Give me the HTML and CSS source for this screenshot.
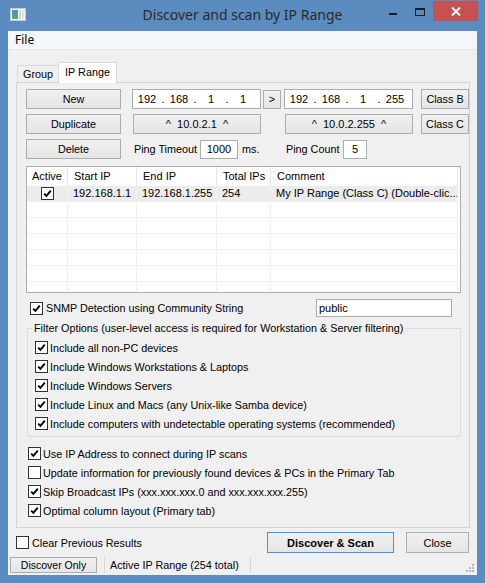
FILE: index.html
```html
<!DOCTYPE html>
<html>
<head>
<meta charset="utf-8">
<title>Discover and scan by IP Range</title>
<link rel="stylesheet" href="styles.css">
</head>
<body>
<div class="window">
  <div class="titlebar">
    <div class="tb-left">
      <svg class="app-icon" viewBox="0 0 16 13" width="16" height="13">
        <rect x="0.5" y="0.5" width="15" height="12" fill="#f4f4f4" stroke="#c9c9c9"/>
        <defs><linearGradient id="ig" x1="0" y1="0" x2="0" y2="1"><stop offset="0" stop-color="#4f8fd0"/><stop offset="1" stop-color="#4fb06a"/></linearGradient></defs>
        <rect x="2" y="2" width="6" height="9" fill="url(#ig)"/>
        <rect x="9" y="2" width="2" height="9" fill="#d8d8d8"/>
        <rect x="12" y="2" width="2" height="9" fill="#e4e4e4"/>
      </svg>
    </div>
    <div class="title">Discover and scan by IP Range</div>
    <div class="tb-right">
      <div class="tb-btn tb-min"><span class="min-glyph"></span></div>
      <div class="tb-btn tb-max"><span class="max-glyph"></span></div>
      <div class="tb-btn tb-close">
        <svg viewBox="0 0 10 9" width="10" height="9"><path d="M1 0.5 L9 8.5 M9 0.5 L1 8.5" stroke="#fff" stroke-width="2" fill="none"/></svg>
      </div>
    </div>
  </div>

  <div class="client">
    <div class="menubar"><span class="menu-item">File</span></div>

    <div class="tabstrip">
      <div class="tab tab-group">Group</div>
      <div class="tab tab-active">IP Range</div>
    </div>

    <div class="panel">
      <div class="row">
        <button class="btn btn-side">New</button>
        <div class="ipfield ip-start">
          <span class="oct">192</span><span class="dot">.</span><span class="oct">168</span><span class="dot">.</span><span class="oct">1</span><span class="dot">.</span><span class="oct">1</span>
        </div>
        <button class="btn btn-arrow">&gt;</button>
        <div class="ipfield ip-end">
          <span class="oct">192</span><span class="dot">.</span><span class="oct">168</span><span class="dot">.</span><span class="oct">1</span><span class="dot">.</span><span class="oct">255</span>
        </div>
        <button class="btn btn-class">Class B</button>
      </div>

      <div class="row row-gap">
        <button class="btn btn-side">Duplicate</button>
        <button class="btn btn-range btn-range1">^&nbsp; 10.0.2.1 &nbsp;^</button>
        <button class="btn btn-range btn-range2">^&nbsp; 10.0.2.255 &nbsp;^</button>
        <button class="btn btn-class">Class C</button>
      </div>

      <div class="row row-gap">
        <button class="btn btn-side">Delete</button>
        <span class="lbl lbl-timeout">Ping Timeout</span>
        <div class="field field-timeout">1000</div>
        <span class="lbl lbl-ms">ms.</span>
        <span class="lbl lbl-count">Ping Count</span>
        <div class="field field-count">5</div>
      </div>

      <div class="list">
        <div class="lrow lhead">
          <div class="c c-active">Active</div>
          <div class="c">Start IP</div>
          <div class="c">End IP</div>
          <div class="c">Total IPs</div>
          <div class="c">Comment</div>
        </div>
        <div class="lrow ldata lsel">
          <div class="c c-active"><span class="cb"><svg viewBox="0 0 11 11"><path d="M2.2 5.6 L4.4 7.8 L8.8 2.6"/></svg></span></div>
          <div class="c">192.168.1.1</div>
          <div class="c">192.168.1.255</div>
          <div class="c">254</div>
          <div class="c">My IP Range (Class C) (Double-clic...</div>
        </div>
        <div class="lrow ldata"><div class="c"></div><div class="c"></div><div class="c"></div><div class="c"></div><div class="c"></div></div>
        <div class="lrow ldata"><div class="c"></div><div class="c"></div><div class="c"></div><div class="c"></div><div class="c"></div></div>
        <div class="lrow ldata"><div class="c"></div><div class="c"></div><div class="c"></div><div class="c"></div><div class="c"></div></div>
        <div class="lrow ldata"><div class="c"></div><div class="c"></div><div class="c"></div><div class="c"></div><div class="c"></div></div>
        <div class="lrow ldata"><div class="c"></div><div class="c"></div><div class="c"></div><div class="c"></div><div class="c"></div></div>
        <div class="lrow ldata"><div class="c"></div><div class="c"></div><div class="c"></div><div class="c"></div><div class="c"></div></div>
      </div>

      <div class="snmp-row">
        <label class="check check-snmp"><span class="cb"><svg viewBox="0 0 11 11"><path d="M2.2 5.6 L4.4 7.8 L8.8 2.6"/></svg></span><span>SNMP Detection using Community String</span></label>
        <div class="field field-snmp">public</div>
      </div>

      <fieldset class="group">
        <legend>Filter Options (user-level access is required for Workstation &amp; Server filtering)</legend>
        <label class="check"><span class="cb"><svg viewBox="0 0 11 11"><path d="M2.2 5.6 L4.4 7.8 L8.8 2.6"/></svg></span><span>Include all non-PC devices</span></label>
        <label class="check"><span class="cb"><svg viewBox="0 0 11 11"><path d="M2.2 5.6 L4.4 7.8 L8.8 2.6"/></svg></span><span>Include Windows Workstations &amp; Laptops</span></label>
        <label class="check"><span class="cb"><svg viewBox="0 0 11 11"><path d="M2.2 5.6 L4.4 7.8 L8.8 2.6"/></svg></span><span>Include Windows Servers</span></label>
        <label class="check"><span class="cb"><svg viewBox="0 0 11 11"><path d="M2.2 5.6 L4.4 7.8 L8.8 2.6"/></svg></span><span>Include Linux and Macs (any Unix-like Samba device)</span></label>
        <label class="check"><span class="cb"><svg viewBox="0 0 11 11"><path d="M2.2 5.6 L4.4 7.8 L8.8 2.6"/></svg></span><span>Include computers with undetectable operating systems (recommended)</span></label>
      </fieldset>

      <div class="options">
        <label class="check"><span class="cb"><svg viewBox="0 0 11 11"><path d="M2.2 5.6 L4.4 7.8 L8.8 2.6"/></svg></span><span>Use IP Address to connect during IP scans</span></label>
        <label class="check"><span class="cb"></span><span>Update information for previously found devices &amp; PCs in the Primary Tab</span></label>
        <label class="check"><span class="cb"><svg viewBox="0 0 11 11"><path d="M2.2 5.6 L4.4 7.8 L8.8 2.6"/></svg></span><span>Skip Broadcast IPs (xxx.xxx.xxx.0 and xxx.xxx.xxx.255)</span></label>
        <label class="check"><span class="cb"><svg viewBox="0 0 11 11"><path d="M2.2 5.6 L4.4 7.8 L8.8 2.6"/></svg></span><span>Optimal column layout (Primary tab)</span></label>
      </div>
    </div>

    <div class="bottom-row">
      <label class="check check-clear"><span class="cb"></span><span>Clear Previous Results</span></label>
      <button class="btn btn-default">Discover &amp; Scan</button>
      <button class="btn btn-close">Close</button>
    </div>

    <div class="statusbar">
      <button class="btn btn-status">Discover Only</button>
      <span class="status-sep"></span>
      <span class="status-text">Active IP Range (254 total)</span>
      <span class="status-sep"></span>
      <svg class="grip" viewBox="0 0 9 9" width="9" height="9">
        <rect x="6" y="0" width="2" height="2" fill="#b8b8b8"/>
        <rect x="3" y="3" width="2" height="2" fill="#b8b8b8"/>
        <rect x="6" y="3" width="2" height="2" fill="#b8b8b8"/>
        <rect x="0" y="6" width="2" height="2" fill="#b8b8b8"/>
        <rect x="3" y="6" width="2" height="2" fill="#b8b8b8"/>
        <rect x="6" y="6" width="2" height="2" fill="#b8b8b8"/>
      </svg>
    </div>
  </div>
</div>
</body>
</html>
```

FILE: styles.css
```css
* { box-sizing: border-box; }
html, body { margin: 0; padding: 0; }
body {
  width: 485px;
  height: 583px;
  overflow: hidden;
  font-family: "Liberation Sans", Arial, sans-serif;
  font-size: 10.8px;
  color: #000;
}

.window {
  width: 485px;
  height: 583px;
  background: #5b8cbf;
  display: flex;
  flex-direction: column;
}

/* ---------- title bar ---------- */
.titlebar {
  height: 31px;
  flex: none;
  display: grid;
  grid-template-columns: 1fr auto 1fr;
  align-items: start;
}
.tb-left { padding: 8px 0 0 10px; }
.app-icon { display: block; }
.title {
  font-family: "Noto Sans", "Open Sans", sans-serif;
  font-size: 14px;
  color: #2a2a2a;
  line-height: 30px;
  white-space: nowrap;
}
.tb-right {
  display: flex;
  justify-content: flex-end;
  padding-top: 1px;
  padding-right: 7px;
}
.tb-btn {
  height: 20px;
  display: flex;
  justify-content: center;
  align-items: flex-start;
}
.tb-min { width: 26px; }
.tb-max { width: 26px; }
.tb-close {
  width: 45px;
  background: #c75050;
  align-items: center;
}
.min-glyph {
  margin-top: 12px;
  margin-left: -3px;
  width: 8px;
  height: 2px;
  background: #1c1c1c;
}
.max-glyph {
  margin-top: 7px;
  width: 10px;
  height: 8px;
  border: 1px solid #1c1c1c;
  border-top-width: 2px;
}

/* ---------- client ---------- */
.client {
  flex: 1;
  margin: 0 8px 8px 8px;
  background: #f0f0f0;
  display: flex;
  flex-direction: column;
}
.menubar {
  height: 19px;
  flex: none;
  background: #f5f6f7;
  border-bottom: 1px solid #e3e4e6;
  padding-left: 7px;
  font-family: "Noto Sans", "Open Sans", sans-serif;
  font-size: 12px;
  line-height: 17px;
}

/* ---------- tabs ---------- */
.tabstrip {
  margin-top: 12px;
  height: 20px;
  flex: none;
  display: flex;
  align-items: flex-end;
  padding-left: 9px;
}
.tab {
  height: 17px;
  border: 1px solid #d9d9d9;
  border-bottom: none;
  background: #f0f0f0;
  text-align: center;
  line-height: 16px;
}
.tab-group { width: 42px; }
.tab-active {
  width: 59px;
  height: 21px;
  margin-left: -1px;
  margin-bottom: -1px;
  background: #fff;
  line-height: 19px;
  position: relative;
  z-index: 1;
}

.panel {
  margin-left: 8px;
  width: 454px;
  height: 446px;
  flex: none;
  border: 1px solid #d4d4d4;
  padding: 6px 0 0 9px;
}

.row {
  display: flex;
  align-items: center;
  height: 20px;
}
.row-gap { margin-top: 5px; }

.btn {
  font: inherit;
  color: #000;
  padding: 0;
  margin: 0;
  height: 20px;
  border: 1px solid #adadad;
  background: linear-gradient(#f0f0f0, #e5e5e5);
  text-align: center;
  white-space: nowrap;
}
.btn-side { width: 95px; }
.btn-arrow { width: 18px; margin-left: 2px; height: 19px; }
.btn-class { width: 48px; margin-left: 8px; }
.btn-range { width: 128px; font-size: 11px; }
.btn-range1 { margin-left: 12px; }
.btn-range2 { margin-left: 24px; }

.ipfield {
  display: flex;
  align-items: center;
  width: 129px;
  height: 20px;
  border: 1px solid #abadb3;
  background: #fff;
  padding-left: 2px;
  font-size: 11px;
}
.ip-start { margin-left: 11px; }
.ip-end { margin-left: 3px; }
.oct { width: 24px; text-align: center; }
.dot { width: 8px; text-align: center; }

.lbl { white-space: nowrap; }
.lbl-timeout { margin-left: 13px; width: 66px; }
.lbl-ms { margin-left: 4px; width: 44px; }
.lbl-count { width: 57px; }
.field {
  height: 19px;
  border: 1px solid #abadb3;
  background: #fff;
  line-height: 17px;
}
.field-timeout { width: 38px; text-align: center; font-size: 11px; }
.field-count { width: 24px; text-align: center; font-size: 11px; }

/* ---------- list ---------- */
.list {
  margin-top: 7px;
  width: 435px;
  height: 127px;
  border: 1px solid #adadad;
  background: #fff;
  overflow: hidden;
  font-size: 11px;
}
.lrow {
  display: grid;
  grid-template-columns: 41px 69px 80px 54px 187px;
}
.lhead { height: 19px; }
.lhead .c {
  border-right: 1px solid #e5e5e5;
  line-height: 18px;
  padding-left: 6px;
}
.lhead .c-active { padding-left: 5px; }
.ldata { height: 16px; }
.ldata .c {
  border-right: 1px solid #f0f0f0;
  border-bottom: 1px solid #f0f0f0;
  line-height: 15px;
  padding-left: 5px;
  white-space: nowrap;
  overflow: hidden;
}
.lsel .c { background: #ececec; }
.ldata .c-active {
  padding-left: 0;
  display: flex;
  justify-content: center;
  align-items: center;
}

/* ---------- checkboxes ---------- */
.cb {
  width: 13px;
  height: 13px;
  flex: none;
  border: 1px solid #333;
  background: #fff;
  display: inline-flex;
}
.cb svg {
  width: 11px;
  height: 11px;
  display: block;
}
.cb path {
  fill: none;
  stroke: #000;
  stroke-width: 1.9;
}
.check {
  display: flex;
  align-items: center;
  gap: 2px;
  height: 19px;
  white-space: nowrap;
}

.snmp-row {
  margin-top: 6px;
  display: flex;
  align-items: center;
  height: 18px;
}
.check-snmp { margin-left: 4px; width: 286px; gap: 3px; }
.field-snmp { width: 136px; height: 18px; padding-left: 2px; line-height: 16px; font-size: 11px; }

.group {
  margin: 5px 0 0 1px;
  width: 434px;
  height: 115px;
  border: 1px solid #dcdcdc;
  padding: 3px 7px 0 7px;
  min-width: 0;
}
.group legend {
  padding: 0 2px;
  margin-left: -3px;
  line-height: 13px;
  white-space: nowrap;
}

.options {
  margin-top: 7px;
  padding-left: 2px;
}

/* ---------- bottom ---------- */
.bottom-row {
  margin-top: 4px;
  height: 21px;
  flex: none;
  display: flex;
  align-items: center;
  padding-left: 8px;
}
.check-clear { gap: 3px; }
.btn-default {
  margin-left: auto;
  width: 127px;
  height: 21px;
  border-color: #3399ff;
  font-weight: bold;
  font-size: 11px;
}
.btn-close {
  margin-left: 12px;
  margin-right: 8px;
  width: 63px;
  height: 21px;
  font-size: 11px;
}

.statusbar {
  margin-top: 2px;
  flex: 1;
  display: flex;
  align-items: center;
  padding-left: 2px;
}
.btn-status {
  width: 87px;
  height: 16px;
  font-size: 10.5px;
  line-height: 14px;
}
.status-sep {
  width: 1px;
  height: 16px;
  background: #d7d7d7;
  margin-left: 7px;
}
.status-text {
  margin-left: 5px;
  width: 133px;
  white-space: nowrap;
}
.grip { margin-left: auto; margin-right: 2px; align-self: flex-end; margin-bottom: 2px; }
```
